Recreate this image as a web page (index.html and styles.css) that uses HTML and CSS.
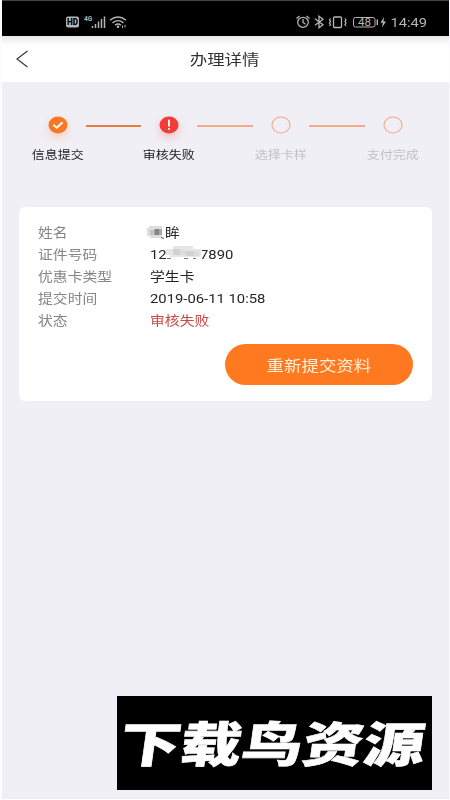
FILE: index.html
```
<!DOCTYPE html>
<html lang="zh-CN">
<head>
<meta charset="utf-8">
<title>办理详情</title>
<link rel="stylesheet" href="styles.css">
</head>
<body>
<div class="screen">
  <div class="statusbar">
    <svg class="status-icons" width="66" height="16" viewBox="0 0 66 16">
      <rect x="1" y="2.500" width="13" height="11" rx="2" fill="#b5b5b5"/>
      <text x="2" y="11" class="hd" textLength="11" lengthAdjust="spacingAndGlyphs">HD</text>
      <text x="19" y="6.500" class="fourg">4G</text>
      <path d="M27.500 14v-2M30.500 14v-4M33.500 14V7.500M36.500 14V5M39.500 14V2.500" stroke="#b5b5b5" stroke-width="1.500"/>
      <g fill="none" stroke="#b5b5b5" stroke-width="1.400"><path d="M45 6.300Q53 -.2 61 6.300M47.500 8.900Q53 4.300 58.500 8.900M50 11.300Q53 8.800 56 11.300"/></g>
      <circle cx="53" cy="12.700" r="1.300" fill="#b5b5b5"/>
      <path d="M57.500 11.500v2.500M60 11v2.500" stroke="#b5b5b5" stroke-width="1"/>
    </svg>
    <div class="status-right">
      <svg width="94" height="16" viewBox="0 0 94 16" fill="none" stroke="#b5b5b5" stroke-width="1.300">
        <ellipse cx="7" cy="8.300" rx="5.300" ry="5"/><path d="M7 5v3.500l2.500 1.700M.5 4.500l3-2.500M10.500 2l3 2.500"/>
        <path d="M19 4.800l8 6-4 3V2.300l4 3-8 6"/>
        <rect x="37.500" y="3" width="8" height="10.500" rx="1"/><path d="M34.500 4.500l-1 1.500 1 1.500-1 1.500 1 1.500-1 1.500M49 4.500l1 1.500-1 1.500 1 1.500-1 1.500 1 1.500"/>
        <rect x="57.500" y="3.500" width="21.500" height="9.500" rx="2" stroke-width="1"/><path d="M81.300 5.500v5.500" stroke-width="1.400"/>
        <text x="62" y="11.700" class="level" textLength="13" lengthAdjust="spacingAndGlyphs">48</text>
        <path d="M88 3l-3.500 5.800h2.300L86 13.500l4-6h-2.500z" fill="#b5b5b5" stroke="none"/>
      </svg>
      <span class="clock">14:49</span>
    </div>
  </div>
  <div class="header">
    <svg class="back" width="14" height="20" viewBox="0 0 14 20"><path d="M11.500 2L1 10 11.500 18" fill="none" stroke="#3a3a3a" stroke-width="1.300"/></svg>
    <h1 class="title"><span class="wide">办理详情</span></h1>
  </div>
  <div class="steps">
    <div class="step">
      <svg class="dot" width="30" height="28" viewBox="0 0 30 28"><ellipse cx="15" cy="14" rx="9.500" ry="8.500" fill="#fa7725"/><path d="M10.300 13.800l3.500 3 5.800-5.600" fill="none" stroke="#fff" stroke-width="1.900"/></svg>
      <span class="wide">信息提交</span>
    </div>
    <i class="line strong"></i>
    <div class="step">
      <svg class="dot red" width="30" height="28" viewBox="0 0 30 28"><ellipse cx="15" cy="14" rx="9.500" ry="8.500" fill="#f43b35"/><path d="M15 8.800v6.800M15 16.900v1.900" stroke="#fff" stroke-width="2"/></svg>
      <span class="wide">审核失败</span>
    </div>
    <i class="line"></i>
    <div class="step idle">
      <svg width="30" height="28" viewBox="0 0 30 28"><ellipse cx="15" cy="14" rx="9" ry="8" fill="none" stroke="#f2ad84" stroke-width="1.200"/></svg>
      <span class="wide">选择卡样</span>
    </div>
    <i class="line"></i>
    <div class="step idle">
      <svg width="30" height="28" viewBox="0 0 30 28"><ellipse cx="15" cy="14" rx="9" ry="8" fill="none" stroke="#f2ad84" stroke-width="1.200"/></svg>
      <span class="wide">支付完成</span>
    </div>
  </div>
  <div class="card">
    <dl class="info">
      <dt><span class="wide">姓名</span></dt>
      <dd class="name"><svg class="mosaic-name" width="18" height="15" viewBox="0 0 18 15"><path d="M2 1h13v12H3v-2H0V3h2z" fill="#ddd"/><path d="M7 4h8v6H7z" fill="#aaa8ac"/><path d="M8 4h4v6H8z" fill="#858388"/><path d="M3 5h4v5H3z" fill="#c4c2c6"/><path d="M14 12.500l3 1" stroke="#555"/></svg><span class="wide">眸</span></dd>
      <dt><span class="wide">证件号码</span></dt>
      <dd class="number"><span class="wide">1234567890</span><svg class="mosaic-id" width="36" height="17" viewBox="0 0 36 17"><path d="M0 0h36v17H0z" fill="#fff"/><path d="M0 4h7V1h20v3h8v8H4v-2H0z" fill="#e6e5e7"/><path d="M7 4h7v6H7zM20 6h8v5h-8z" fill="#d2d1d4"/><path d="M14 5h6v5h-6zM28 6h5v5h-5z" fill="#dcdbdd"/><path d="M1 13.500h4M18 13.500h4M27 13.500h3" stroke="#777"/></svg></dd>
      <dt><span class="wide">优惠卡类型</span></dt>
      <dd><span class="wide">学生卡</span></dd>
      <dt><span class="wide">提交时间</span></dt>
      <dd><span class="wide">2019-06-11 10:58</span></dd>
      <dt><span class="wide">状态</span></dt>
      <dd class="failed"><span class="wide">审核失败</span></dd>
    </dl>
    <button class="submit"><span class="wide">重新提交资料</span></button>
  </div>
  <div class="watermark"><span class="brand">下载鸟资源</span></div>
</div>
</body>
</html>
```
FILE: styles.css
```
* { box-sizing: border-box; }
body { margin: 0; background: #fff; font-family: Roboto, "Noto Sans CJK SC", sans-serif; }
.screen {
  position: relative;
  width: 450px;
  height: 800px;
  background: #f0eff5;
  border-left: 2px solid #fcfcfe;
  border-right: 1px solid #fafafc;
  border-bottom: 1px solid #fff;
  overflow: hidden;
}
.wide { display: inline-block; white-space: nowrap; transform: scaleX(1.14); }
.statusbar {
  display: flex;
  justify-content: space-between;
  height: 36px;
  margin-right: -1px;
  padding: 14px 23px 0 63px;
  background: #000;
  border-top: 1px solid #444;
}
.hd { font: 900 8.500px Roboto, sans-serif; fill: #000; }
.fourg { font: 700 6.500px Roboto, sans-serif; fill: #b5b5b5; }
.level { font: 10px Roboto, sans-serif; fill: #b5b5b5; stroke: none; }
.statusbar svg { margin-top: -1px; }
.status-right { display: flex; height: 16px; }
.clock {
  width: 37px;
  font-size: 13px;
  line-height: 15px;
  color: #b5b5b5;
  transform: scaleX(1.13);
  transform-origin: right;
  text-align: right;
}
.header {
  display: flex;
  align-items: center;
  height: 46px;
  padding-left: 14px;
  background: linear-gradient(#e8e8e8, #fff 9px);
}
.back { margin-top: -1px; }
.title {
  flex: 1;
  margin: 2px 29px 0 0;
  text-align: center;
  font-size: 15.300px;
  font-weight: 400;
  line-height: 20px;
  color: #333;
}
.steps { display: flex; height: 125px; padding: 29px 0 0 27.500px; }
.step {
  display: flex;
  flex-direction: column;
  align-items: center;
  width: 56px;
  font-size: 11.400px;
  line-height: 18px;
  color: #222;
}
.step .wide { margin-top: 7px; }
.idle { color: #c2c1c5; }
.dot { filter: drop-shadow(0 4px 4px #ff772544); }
.red { filter: drop-shadow(0 4px 4px #f43b3544); }
.line { width: 55.700px; height: 2px; margin-top: 14px; background: #f2ad84; }
.strong { background: #ea7d3e; }
.card {
  display: flex;
  flex-direction: column;
  width: 413px;
  height: 194px;
  margin-left: 17px;
  padding: 15px 19px 16px;
  background: #fff;
  border-radius: 6px;
}
.info {
  display: grid;
  grid-template-columns: 112px 1fr;
  grid-auto-rows: 22px;
  margin: 0;
  font-size: 13px;
  line-height: 22px;
}
.info .wide { transform-origin: left; }
dt { color: #858585; }
dd { position: relative; margin: 0; color: #252525; }
.name { display: flex; align-items: center; }
.mosaic-name { margin: -2px 0 0 -3px; }
.mosaic-id { position: absolute; left: 16px; top: 1px; }
.failed { color: #c94b45; }
.submit {
  align-self: flex-end;
  flex-shrink: 0;
  width: 188px;
  height: 41px;
  margin-top: 12px;
  padding: 0 0 1px;
  border: 0;
  border-radius: 21px;
  background: #ff7921;
  color: #fff1dc;
  font: 15.300px "Noto Sans CJK SC", sans-serif;
}
.watermark {
  position: absolute;
  left: 115px;
  top: 696px;
  display: flex;
  align-items: center;
  justify-content: center;
  width: 315px;
  height: 94px;
  background: #000;
}
.brand {
  margin: -5px 0 0 -2px;
  font: 900 48px/94px "Noto Sans CJK SC", sans-serif;
  color: #fff;
  white-space: nowrap;
  -webkit-text-stroke: .6px #fff;
  transform: skewX(-8deg) scaleX(1.27);
}
```
